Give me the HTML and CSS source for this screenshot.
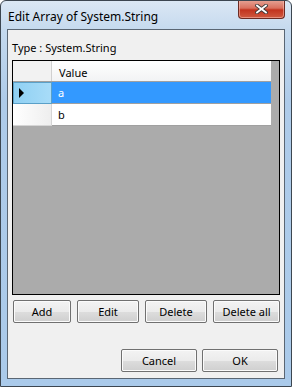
FILE: index.html
```html
<!DOCTYPE html>
<html lang="en">
<head>
    <meta charset="UTF-8">
    <title>Edit Array of System.String</title>
    <link rel="stylesheet" href="styles.css">
</head>
<body>
    <div class="window">
        <div class="titlebar">
            <span class="title">Edit Array of System.String</span>
            <button class="close" aria-label="Close">
                <svg width="13" height="10" viewBox="0 0 13 10">
                    <path d="M2 1.5 L11 8.5 M11 1.5 L2 8.5" stroke="#3e3a3a" stroke-width="3.6" stroke-linecap="square"/>
                    <path d="M2 1.5 L11 8.5 M11 1.5 L2 8.5" stroke="#ffffff" stroke-width="1.8" stroke-linecap="square"/>
                </svg>
            </button>
        </div>
        <div class="client">
            <div class="type">Type : System.String</div>
            <div class="grid">
                <div class="row head">
                    <div class="rh"></div>
                    <div class="cell">Value</div>
                </div>
                <div class="row selected">
                    <div class="rh"><span class="arrow"></span></div>
                    <div class="cell">a</div>
                </div>
                <div class="row">
                    <div class="rh"></div>
                    <div class="cell">b</div>
                </div>
            </div>
            <div class="actions">
                <button class="btn add">Add</button>
                <button class="btn edit">Edit</button>
                <button class="btn del">Delete</button>
                <button class="btn delall">Delete all</button>
            </div>
            <div class="footer">
                <button class="btn dlg">Cancel</button>
                <button class="btn dlg">OK</button>
            </div>
        </div>
    </div>
</body>
</html>
```

FILE: styles.css
```css
body {
    margin: 0;
    font-family: "Noto Sans", "DejaVu Sans", sans-serif;
    background: #ffffff;
}
.window {
    width: 290px;
    height: 385px;
    border: 1px solid #3c4650;
    border-radius: 6px 6px 0 0;
    background: linear-gradient(to bottom, #dbe7f4 0px, #c4d9ee 30px, #aecbe9 100px, #aacaea 100%);
    display: flex;
    flex-direction: column;
    overflow: hidden;
}
.titlebar {
    height: 28px;
    display: flex;
    align-items: flex-start;
}
.title {
    font-size: 12px;
    color: #000;
    margin: 7px 0 0 7px;
}
.close {
    margin-left: auto;
    margin-right: 6px;
    width: 47px;
    height: 19px;
    margin-top: -1px;
    border: 1px solid #6b2a22;
    border-top: none;
    border-radius: 0 0 4px 4px;
    background: linear-gradient(to bottom, #e6a597 0%, #d9705e 45%, #c2331e 55%, #cf5a40 100%);
    padding: 0;
    display: flex;
    align-items: center;
    justify-content: center;
    box-shadow: inset 0 0 0 1px rgba(255, 200, 190, 0.5);
}
.client {
    margin: 0 6px 7px;
    flex: 1;
    border: 1px solid #5a6673;
    background: #f0f0f0;
    font-size: 11px;
}
.type {
    margin: 10px 0 0 4px;
    height: 20px;
}
.grid {
    margin-left: 4px;
    width: 266px;
    height: 233px;
    border: 1px solid #000;
    background: #ababab;
}
.row {
    display: flex;
    width: 258px;
    height: 22px;
    background: #fff;
}
.row.head {
    height: 20px;
    border-bottom: 1px solid #a0a0a0;
    background: linear-gradient(to bottom, #ffffff, #f2f3f4);
}
.rh {
    width: 38px;
    border-right: 1px solid #d5d5d5;
    border-bottom: 1px solid #d5d5d5;
    background: linear-gradient(to right, #ffffff, #eeeeee);
    display: flex;
    align-items: center;
}
.row.head .rh {
    border-bottom: none;
    background: #f2f2f2;
    border-right: 1px solid #d0d0d0;
}
.cell {
    flex: 1;
    padding-left: 6px;
    display: flex;
    align-items: center;
    border-bottom: 1px solid #a0a0a0;
}
.row.head .cell {
    border-bottom: none;
    padding-left: 7px;
    padding-top: 2px;
}
.row.selected .cell {
    background: #3399ff;
    color: #fff;
}
.row.selected .rh {
    background: linear-gradient(to right, #8fd0f3, #a8dcf8);
    border: 1px solid #5aa0c8;
    width: 37px;
    height: 20px;
}
.arrow {
    width: 0;
    height: 0;
    margin-left: 5px;
    border-top: 5px solid transparent;
    border-bottom: 5px solid transparent;
    border-left: 5px solid #000;
}
.btn {
    height: 23px;
    font-family: inherit;
    font-size: 11px;
    color: #000;
    border: 1px solid #707070;
    border-radius: 2px;
    background: linear-gradient(to bottom, #f3f3f3 0%, #ebebeb 50%, #dddddd 51%, #cfcfcf 100%);
    box-shadow: inset 0 0 0 1px #fbfbfb;
    padding: 0;
}
.actions {
    display: flex;
    gap: 6px;
    margin: 5px 0 0 5px;
}
.add { width: 58px; }
.edit { width: 62px; }
.del { width: 62px; }
.delall { width: 67px; }
.footer {
    display: flex;
    justify-content: flex-end;
    gap: 5px;
    margin: 26px 6px 0 0;
}
.dlg { width: 76px; }
```
